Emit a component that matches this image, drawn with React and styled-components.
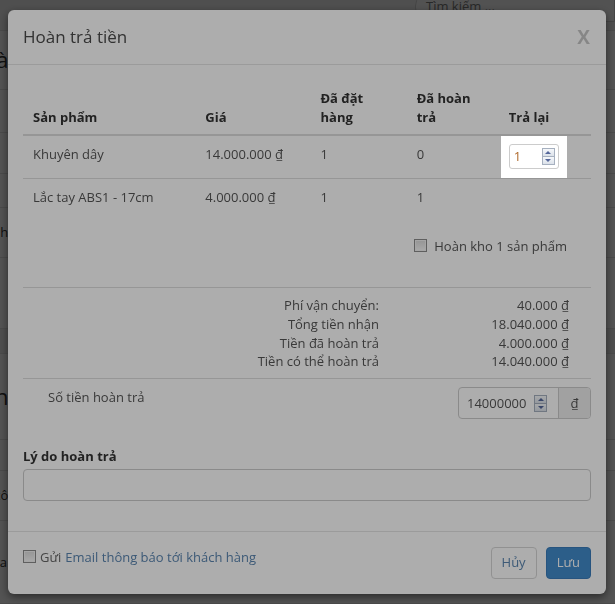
import React from 'react';
import styled, { createGlobalStyle } from 'styled-components';

const GlobalStyles = createGlobalStyle`
  * { box-sizing: border-box; }
  html, body {
    margin: 0;
    padding: 0;
  }
  body {
    background: #f2f2f2;
    font-family: "Open Sans", "Noto Sans", sans-serif;
    font-size: 13px;
    line-height: 1.42857;
    color: #555;
    overflow: hidden;
  }
`;

/* page behind the modal */
const Page = styled.div`
  height: 604px;
  background: #f7f7f7;
`;

const TopBar = styled.div`
  height: 31px;
  display: flex;
  justify-content: flex-end;
  border-bottom: 1px solid #ddd;
  background: #eaeaea;
`;

const Search = styled.div`
  width: 200px;
  height: 30px;
  margin-top: -8px;
  padding: 4px 10px;
  border: 1px solid #ccc;
  border-radius: 14px 0 0 14px;
  background: #f4f4f4;
  color: #777;
  font-size: 13px;
`;

const PageRow = styled.div`
  height: ${p => p.h}px;
  border-bottom: 1px solid #ddd;
  display: flex;
  align-items: center;
  background: ${p => p.bg || 'transparent'};
  color: #333;
  font-size: ${p => p.fs || 13}px;
  white-space: nowrap;
  margin-left: -${p => p.shift || 0}px;
`;

const Backdrop = styled.div`
  position: fixed;
  inset: 0;
  background: rgba(0, 0, 0, 0.5);
`;

/* modal */
const Dialog = styled.div`
  position: absolute;
  top: 10px;
  left: 8px;
  width: 598px;
  background: #fff;
  border-radius: 6px;
  box-shadow: 0 3px 9px rgba(0, 0, 0, 0.5);
`;

const Header = styled.div`
  display: flex;
  justify-content: space-between;
  align-items: center;
  padding: 15px 15px 15px;
  border-bottom: 1px solid #e5e5e5;
`;

const Title = styled.h4`
  margin: 0;
  font-size: 17px;
  font-weight: 400;
  line-height: 24px;
  color: #4a4a4a;
`;

const Close = styled.span`
  font-size: 19px;
  font-weight: 700;
  color: #000;
  opacity: 0.22;
  line-height: 1;
  margin-right: 1px;
`;

const Body = styled.div`
  padding: 16px 15px 0;
`;

const Table = styled.table`
  width: 100%;
  border-collapse: collapse;
  margin-bottom: 22px;
`;

const Th = styled.th`
  width: ${p => p.w}px;
  text-align: left;
  vertical-align: bottom;
  padding: 8px 10px;
  border-bottom: 2px solid #ddd;
  color: #333;
  font-weight: 700;
`;

const Td = styled.td`
  vertical-align: top;
  padding: ${p => (p.tight ? '0 2px' : '9px 10px 8px')};
  border-top: 1px solid #ddd;
  color: #555;
`;

const Spotlight = styled.div`
  display: inline-block;
  position: relative;
  z-index: 2;
  padding: 8px 8px 9px;
  background: #fff;
  box-shadow: 0 0 0 2000px rgba(0, 0, 0, 0.32);
`;

const NumberBox = styled.div`
  display: flex;
  align-items: center;
  width: ${p => p.w}px;
  height: 25px;
  padding: 0 3px 0 4px;
  border: 1px solid #ccc;
  border-radius: 3px;
  background: #fff;
`;

const NumberInput = styled.input`
  flex: 1;
  min-width: 0;
  border: 0;
  outline: 0;
  padding: 0;
  background: transparent;
  font: inherit;
  color: ${p => p.tone || '#555'};
`;

const Spinner = styled.div`
  display: flex;
  flex-direction: column;
  width: 13px;
  height: 17px;
  border: 1px solid #a6b0bf;
  background: #e6eaf0;
`;

const SpinHalf = styled.div`
  flex: 1;
  display: flex;
  align-items: center;
  justify-content: center;
  background: linear-gradient(#f6f8fb, #dbe1e9);
  & + & { border-top: 1px solid #a6b0bf; }
  &::after {
    content: "";
    border-left: 3px solid transparent;
    border-right: 3px solid transparent;
    ${p => (p.down ? 'border-top: 3px solid #55679a;' : 'border-bottom: 3px solid #55679a;')}
  }
`;

const CheckRow = styled.label`
  display: flex;
  align-items: center;
  justify-content: flex-end;
  gap: 7px;
  padding-right: 24px;
  color: #555;
`;

const Box = styled.span`
  width: 13px;
  height: 13px;
  border: 1px solid #8c8c8c;
  background: linear-gradient(#dcdcdc, #fafafa);
  box-shadow: inset 0 0 0 1px #f4f4f4;
`;

const Rule = styled.hr`
  margin: ${p => p.m || '0'};
  border: 0;
  border-top: 1px solid #ddd;
`;

const Summary = styled.div`
  display: grid;
  grid-template-columns: 1fr 212px;
  padding: 8px 0 7px;
  line-height: 18.7px;
  color: #555;
  div:nth-child(odd) { text-align: right; }
  div:nth-child(even) { text-align: right; padding-right: 22px; }
`;

const AmountRow = styled.div`
  display: flex;
  justify-content: space-between;
  align-items: flex-start;
  padding: 8px 0 0 25px;
  span { margin-top: 1px; }
`;

const InputGroup = styled.div`
  display: flex;
  width: 133px;
  height: 32px;
  border: 1px solid #ccc;
  border-radius: 4px;
  overflow: hidden;
`;

const GroupField = styled.div`
  flex: 1;
  display: flex;
  align-items: center;
  gap: 8px;
  padding: 0 9px 0 8px;
`;

const Addon = styled.div`
  width: 32px;
  display: flex;
  align-items: center;
  justify-content: center;
  border-left: 1px solid #ccc;
  background: #eee;
  color: #555;
`;

const FieldLabel = styled.div`
  margin-top: 28px;
  font-weight: 700;
  color: #333;
`;

const TextInput = styled.input`
  display: block;
  width: 100%;
  height: 32px;
  margin: 3px 0 30px;
  border: 1px solid #ccc;
  border-radius: 4px;
  font: inherit;
  padding: 0 10px;
  background: #fff;
`;

const Footer = styled.div`
  display: flex;
  justify-content: space-between;
  align-items: flex-start;
  padding: 15px;
  border-top: 1px solid #e5e5e5;
`;

const EmailCheck = styled.label`
  display: flex;
  align-items: center;
  gap: 4px;
  margin-top: 1px;
  color: #666;
  span.link { color: #5a85b0; }
`;

const Buttons = styled.div`
  display: flex;
  gap: 9px;
`;

const Button = styled.button`
  height: 32px;
  padding: 0 10px;
  border-radius: 4px;
  font: inherit;
  border: 1px solid ${p => (p.primary ? '#3a7dbb' : '#d6d6d6')};
  background: ${p => (p.primary ? '#428bca' : '#fff')};
  color: ${p => (p.primary ? '#fff' : '#5a85b0')};
`;

const items = [
  { name: 'Khuyên dây', price: '14.000.000 ₫', ordered: 1, returned: 0, editable: true },
  { name: 'Lắc tay ABS1 - 17cm', price: '4.000.000 ₫', ordered: 1, returned: 1 },
];

const totals = [
  ['Phí vận chuyển:', '40.000 ₫'],
  ['Tổng tiền nhận', '18.040.000 ₫'],
  ['Tiền đã hoàn trả', '4.000.000 ₫'],
  ['Tiền có thể hoàn trả', '14.040.000 ₫'],
];

const backRows = [
  { h: 59, fs: 22, shift: 20, text: 'Hàng' },
  { h: 43 },
  { h: 41 },
  { h: 34 },
  { h: 50, shift: 23, text: 'Kênh' },
  { h: 71 },
  { h: 25, bg: '#e8e8e8' },
  { h: 86, fs: 22, shift: 35, text: 'Tiền' },
  { h: 31 },
  { h: 50, shift: 28, text: 'Mã cô' },
  { h: 83, shift: 10, text: 'Na' },
];

const Spin = () => (
  <Spinner>
    <SpinHalf />
    <SpinHalf down />
  </Spinner>
);

const App = () => (
  <>
    <GlobalStyles />
    <Page>
      <TopBar>
        <Search>Tìm kiếm ...</Search>
      </TopBar>
      {backRows.map((r, i) => (
        <PageRow key={i} h={r.h} fs={r.fs} shift={r.shift} bg={r.bg}>
          {r.text}
        </PageRow>
      ))}
    </Page>
    <Backdrop />
    <Dialog>
      <Header>
        <Title>Hoàn trả tiền</Title>
        <Close>X</Close>
      </Header>
      <Body>
        <Table>
          <thead>
            <tr>
              <Th w={172}>Sản phẩm</Th>
              <Th w={115}>Giá</Th>
              <Th w={96}>Đã đặt<br />hàng</Th>
              <Th w={92}>Đã hoàn<br />trả</Th>
              <Th w={92}>Trả lại</Th>
            </tr>
          </thead>
          <tbody>
            {items.map(it => (
              <tr key={it.name}>
                <Td>{it.name}</Td>
                <Td>{it.price}</Td>
                <Td>{it.ordered}</Td>
                <Td>{it.returned}</Td>
                {it.editable ? (
                  <Td tight>
                    <Spotlight>
                      <NumberBox w={50}>
                        <NumberInput tone="#b06a2c" defaultValue="1" />
                        <Spin />
                      </NumberBox>
                    </Spotlight>
                  </Td>
                ) : (
                  <Td />
                )}
              </tr>
            ))}
          </tbody>
        </Table>

        <CheckRow>
          <Box />
          Hoàn kho 1 sản phẩm
        </CheckRow>

        <Rule m="32px 0 0" />
        <Summary>
          {totals.map(([label, value]) => (
            <React.Fragment key={label}>
              <div>{label}</div>
              <div>{value}</div>
            </React.Fragment>
          ))}
        </Summary>
        <Rule />

        <AmountRow>
          <span>Số tiền hoàn trả</span>
          <InputGroup>
            <GroupField>
              <span>14000000</span>
              <Spin />
            </GroupField>
            <Addon>₫</Addon>
          </InputGroup>
        </AmountRow>

        <FieldLabel>Lý do hoàn trả</FieldLabel>
        <TextInput />
      </Body>
      <Footer>
        <EmailCheck>
          <Box />
          Gửi <span className="link">Email thông báo tới khách hàng</span>
        </EmailCheck>
        <Buttons>
          <Button>Hủy</Button>
          <Button primary>Lưu</Button>
        </Buttons>
      </Footer>
    </Dialog>
  </>
);

export default App;
